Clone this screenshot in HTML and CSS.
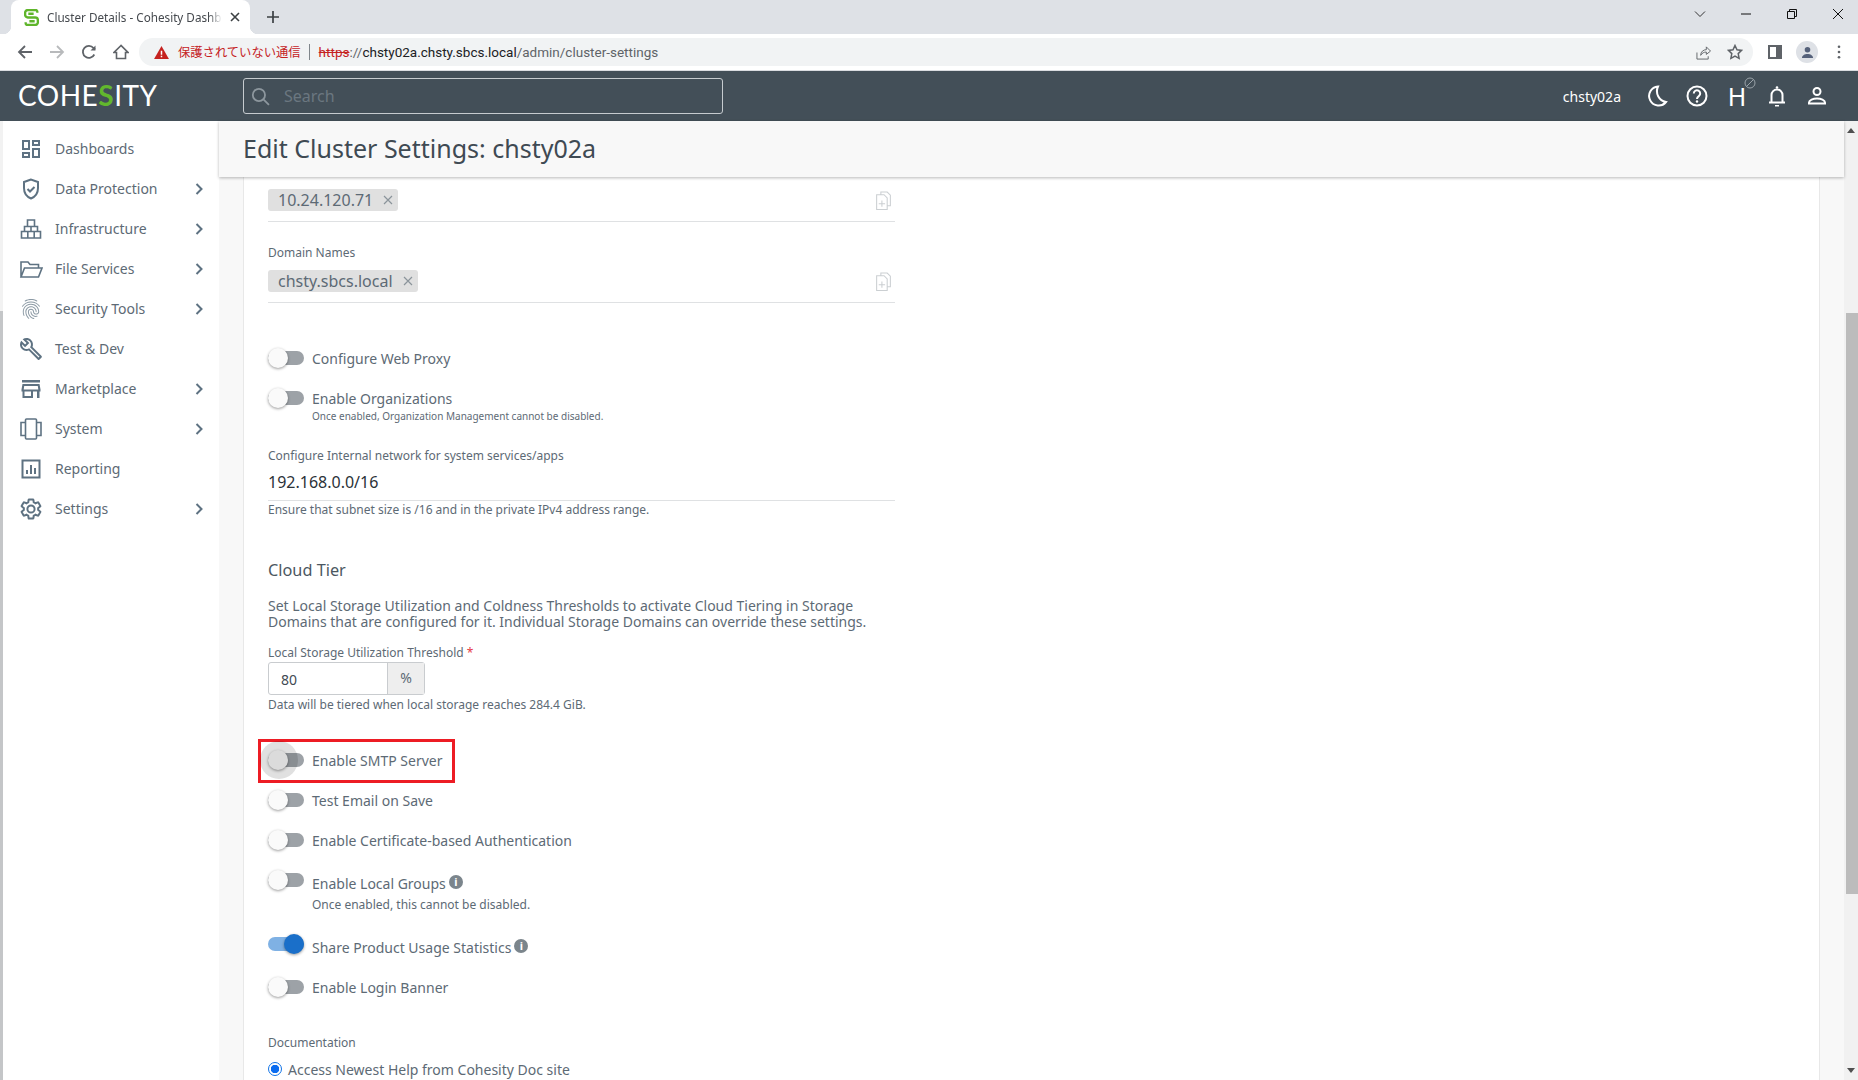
FILE: index.html
```html
<!DOCTYPE html>
<html lang="en">
<head>
<meta charset="utf-8">
<title>Cluster Details - Cohesity Dashboard</title>
<link rel="stylesheet" href="styles.css">
</head>
<body>
<div class="app">
  <div class="tabstrip">
    <div class="tab">
      <svg class="favicon" viewBox="0 0 14 16"><path d="M12.5 3.5V2.5a1.5 1.5 0 0 0-1.5-1.5H3.5A2.5 2.5 0 0 0 1 3.500V5.500A2.500 2.500 0 0 0 3.500 8H10.500A2.500 2.500 0 0 1 13 10.500V12.500A2.500 2.500 0 0 1 10.500 15H3A1.500 1.500 0 0 1 1.500 13.500V12.500M4 4.500H9M5 11.500H10" fill="none" stroke="#5fb52b" stroke-width="2.200"/></svg>
      <span class="tab-title">Cluster Details - Cohesity Dashboard</span>
      <svg class="tab-x" viewBox="0 0 10 10"><path d="M1 1l8 8M9 1l-8 8" stroke="#3c4043" stroke-width="1.600"/></svg>
    </div>
    <svg class="newtab" viewBox="0 0 12 12"><path d="M6 0v12M0 6h12" stroke="#3c4043" stroke-width="1.700"/></svg>
    <div class="winctl">
      <svg class="wbtn" viewBox="0 0 12 12"><path d="M1 3.500l5 5 5-5" fill="none" stroke="#333" stroke-width="1"/></svg>
      <svg class="wbtn" viewBox="0 0 12 12"><path d="M1 6h10" stroke="#111" stroke-width="1"/></svg>
      <svg class="wbtn" viewBox="0 0 12 12"><path d="M1.500 3.500h7v7h-7zM3.500 3.500v-2h7v7h-2" fill="none" stroke="#111" stroke-width="1"/></svg>
      <svg class="wbtn" viewBox="0 0 12 12"><path d="M1 1l10 10M11 1L1 11" stroke="#111" stroke-width="1"/></svg>
    </div>
  </div>

  <div class="toolbar">
    <svg class="navbtn" viewBox="0 0 16 16"><path d="M15 8H2M8 2L2 8l6 6" fill="none" stroke="#5f6368" stroke-width="1.800"/></svg>
    <svg class="navbtn" viewBox="0 0 16 16"><path d="M1 8h13M8 2l6 6-6 6" fill="none" stroke="#b8babc" stroke-width="1.800"/></svg>
    <svg class="navbtn" viewBox="0 0 16 16"><path d="M13.300 10.500A6 6 0 1 1 12.500 4L14 5.500" fill="none" stroke="#5f6368" stroke-width="1.800"/><path d="M14.500 1.500v5h-5z" fill="#5f6368"/></svg>
    <svg class="navbtn" viewBox="0 0 16 16"><path d="M8 1.500L1 8.500h2.500v6h9v-6H15z" fill="none" stroke="#5f6368" stroke-width="1.600"/></svg>
    <div class="omnibox">
      <svg class="warn" viewBox="0 0 16 14"><path d="M8 0L16 14H0z" fill="#c5221f"/><path d="M7.200 5h1.600v4.500H7.200zM7.200 10.500h1.600V12H7.200z" fill="#fff"/></svg>
      <span class="insecure">保護されていない通信</span>
      <span class="omni-sep"></span>
      <span class="url"><span class="scheme">https</span><span class="url-dim">://</span>chsty02a.chsty.sbcs.local<span class="url-dim">/admin/cluster-settings</span></span>
      <svg class="omni-share" viewBox="0 0 16 16"><path d="M1 8v7h12v-3M5 11c0-4 3-6 6-6V2l4.500 4.500L11 10V7.500C8.500 7.500 6.500 8.500 5 11z" fill="none" stroke="#5f6368" stroke-width="1"/></svg>
      <svg class="omni-star" viewBox="0 0 16 16"><path d="M8 1.500l2 4.300 4.600.6-3.400 3.200.9 4.700L8 12l-4.100 2.300.9-4.700L1.400 6.400 6 5.800z" fill="none" stroke="#5f6368" stroke-width="1.500"/></svg>
    </div>
    <svg class="tool-panel" viewBox="0 0 14 14"><path d="M0 0h14v14H0zM2 2v10h6V2z" fill="#5f6368" fill-rule="evenodd"/></svg>
    <div class="avatar"><svg viewBox="0 0 14 14"><circle cx="7" cy="4" r="3" fill="#55617a"/><path d="M1 13c0-3 3-4.500 6-4.500s6 1.500 6 4.500z" fill="#55617a"/></svg></div>
    <svg class="tool-menu" viewBox="0 0 4 16"><circle cx="2" cy="2" r="1.500" fill="#5f6368"/><circle cx="2" cy="8" r="1.500" fill="#5f6368"/><circle cx="2" cy="14" r="1.500" fill="#5f6368"/></svg>
  </div>

  <header class="topbar">
    <div class="logo">COHE<span class="logo-s">S</span>ITY</div>
    <div class="search">
      <svg class="search-ic" viewBox="0 0 18 18"><circle cx="7.500" cy="7.500" r="5.800" fill="none" stroke="#8d979e" stroke-width="1.700"/><path d="M12 12l5 5" stroke="#8d979e" stroke-width="1.700"/></svg>
      <span class="search-ph">Search</span>
    </div>
    <span class="cluster-name">chsty02a</span>
    <svg class="top-ic" viewBox="0 0 24 24"><path d="M13 2.500A9.500 9.500 0 1 0 21 18 11 11 0 0 1 13 2.500z" fill="none" stroke="#fff" stroke-width="2"/></svg>
    <svg class="top-ic" viewBox="0 0 24 24"><circle cx="12" cy="12" r="9.500" fill="none" stroke="#fff" stroke-width="2"/><path d="M8.800 9.500a3.200 3.200 0 1 1 5 2.600c-1.200.8-1.800 1.400-1.800 2.900" fill="none" stroke="#fff" stroke-width="2"/><circle cx="12" cy="17.500" r="1.200" fill="#fff"/></svg>
    <div class="helios"><span>H</span><svg class="helios-off" viewBox="0 0 12 12"><circle cx="6" cy="6" r="5" fill="none" stroke="#9aa3a9" stroke-width="1"/><path d="M2.500 9.500l7-7" stroke="#9aa3a9" stroke-width="1"/></svg></div>
    <svg class="top-ic" viewBox="0 0 24 24"><path d="M4 18.500h16M6.500 18.500V11a5.500 5.500 0 0 1 11 0v7.500" fill="none" stroke="#fff" stroke-width="2"/><circle cx="12" cy="3.500" r="1.300" fill="#fff"/><path d="M10 21h4v1.500h-4z" fill="#fff"/></svg>
    <svg class="top-ic" viewBox="0 0 24 24"><circle cx="12" cy="7.500" r="3.500" fill="none" stroke="#fff" stroke-width="2"/><path d="M4 19.500v-1c0-2.500 4-4 8-4s8 1.500 8 4v1z" fill="none" stroke="#fff" stroke-width="2"/></svg>
  </header>

  <div class="body">
    <nav class="sidebar">
      <a class="nav-item"><svg class="nav-ic" viewBox="0 0 24 24"><path fill-rule="evenodd" d="M19 5v2h-4V5h4M9 5v6H5V5h4m10 8v6h-4v-6h4M9 17v2H5v-2h4M21 3h-8v6h8V3zM11 3H3v10h8V3zm10 8h-8v10h8V11zm-10 4H3v6h8v-6z"/></svg><span class="nav-label">Dashboards</span></a>
      <a class="nav-item"><svg class="nav-ic line" viewBox="0 0 24 24"><path d="M12 2.500L5 5v6c0 4.800 2.900 8.800 7 10.500 4.100-1.700 7-5.700 7-10.500V5z"/><path d="M8.500 12l2.500 2.500 4.500-4.500"/></svg><span class="nav-label">Data Protection</span><svg class="chev" viewBox="0 0 8 12"><path d="M1.500 1l5 5-5 5"/></svg></a>
      <a class="nav-item"><svg class="nav-ic line thin" viewBox="0 0 24 24"><path d="M8.500 3h7v6.500h-7zM5.500 9.500h13v5h-13zM2.500 14.500h19V21h-19zM8.800 14.500V21M15.200 14.500V21M12 9.500v5"/></svg><span class="nav-label">Infrastructure</span><svg class="chev" viewBox="0 0 8 12"><path d="M1.500 1l5 5-5 5"/></svg></a>
      <a class="nav-item"><svg class="nav-ic line thin" viewBox="0 0 24 24"><path d="M2 20V5h7l2 2.500h8.500V11M2 20l3.500-9H23l-3.500 9z"/></svg><span class="nav-label">File Services</span><svg class="chev" viewBox="0 0 8 12"><path d="M1.500 1l5 5-5 5"/></svg></a>
      <a class="nav-item"><svg class="nav-ic soft" viewBox="0 0 24 24"><path d="M17.810 4.470c-.08 0-.16-.02-.23-.06C15.660 3.420 14 3 12.010 3c-1.980 0-3.860.47-5.570 1.410-.24.13-.54.04-.68-.2-.13-.24-.04-.55.2-.68C7.820 2.520 9.860 2 12.010 2c2.130 0 3.990.47 6.030 1.520.25.13.34.43.21.67-.09.18-.26.28-.44.28zM3.500 9.720c-.1 0-.2-.03-.29-.09-.23-.16-.28-.47-.12-.7.99-1.400 2.250-2.500 3.750-3.270C9.980 4.040 14 4.030 17.150 5.650c1.500.77 2.760 1.860 3.750 3.250.16.22.11.54-.12.7-.23.16-.54.11-.7-.12-.9-1.260-2.040-2.250-3.390-2.940-2.870-1.470-6.540-1.470-9.400.01-1.360.7-2.500 1.700-3.400 2.960-.08.14-.23.21-.39.21zm6.250 12.070c-.13 0-.26-.05-.35-.15-.87-.87-1.340-1.430-2.010-2.640-.69-1.230-1.050-2.730-1.050-4.340 0-2.970 2.540-5.390 5.660-5.390s5.660 2.420 5.660 5.390c0 .28-.22.5-.5.5s-.5-.22-.5-.5c0-2.420-2.090-4.390-4.660-4.390-2.570 0-4.660 1.970-4.660 4.390 0 1.440.32 2.770.93 3.850.64 1.150 1.080 1.640 1.850 2.420.19.2.19.51 0 .71-.11.1-.24.15-.37.15zm7.170-1.850c-1.190 0-2.240-.3-3.100-.89-1.490-1.010-2.380-2.650-2.380-4.390 0-.28.22-.5.5-.5s.5.22.5.5c0 1.410.72 2.740 1.940 3.560.71.48 1.540.71 2.540.71.24 0 .64-.03 1.040-.1.27-.05.53.13.58.41.05.27-.13.53-.41.58-.57.11-1.070.12-1.210.12zM14.910 22c-.04 0-.09-.01-.13-.02-1.590-.44-2.630-1.030-3.720-2.100-1.400-1.390-2.170-3.240-2.170-5.220 0-1.620 1.380-2.940 3.080-2.940 1.700 0 3.080 1.320 3.080 2.940 0 1.070.93 1.940 2.080 1.940s2.080-.87 2.080-1.940c0-3.770-3.250-6.830-7.250-6.830-2.840 0-5.440 1.580-6.610 4.030-.39.81-.59 1.760-.59 2.800 0 .78.07 2.010.67 3.610.1.26-.03.55-.29.64-.26.1-.55-.04-.64-.29-.49-1.310-.73-2.610-.73-3.960 0-1.200.23-2.290.68-3.240 1.330-2.790 4.280-4.600 7.510-4.600 4.550 0 8.250 3.510 8.250 7.830 0 1.620-1.380 2.940-3.080 2.940s-3.080-1.320-3.080-2.940c0-1.070-.93-1.940-2.080-1.940s-2.080.87-2.080 1.940c0 1.710.66 3.310 1.870 4.510.95.94 1.860 1.460 3.270 1.850.27.07.42.35.35.61-.05.23-.26.38-.47.38z"/></svg><span class="nav-label">Security Tools</span><svg class="chev" viewBox="0 0 8 12"><path d="M1.500 1l5 5-5 5"/></svg></a>
      <a class="nav-item"><svg class="nav-ic" viewBox="0 0 24 24"><path fill-rule="evenodd" d="M22.610 18.990l-9.080-9.080c.93-2.340.45-5.100-1.440-7C9.790.61 6.210.4 3.660 2.250L7.500 6.100 6.080 7.510 2.250 3.690C.4 6.230.61 9.820 2.910 12.110c1.860 1.860 4.570 2.350 6.890 1.480l9.110 9.110c.39.39 1.020.39 1.410 0l2.300-2.300c.4-.38.4-1.010-.01-1.410zm-3 1.600l-9.460-9.460c-.61.45-1.290.72-2 .82-1.360.2-2.790-.21-3.830-1.250C3.370 9.760 2.930 8.500 3 7.260l3.090 3.090 4.240-4.240-3.090-3.090c1.240-.07 2.490.37 3.440 1.310 1.080 1.080 1.490 2.570 1.240 3.960-.12.71-.42 1.370-.88 1.960l9.450 9.450-.88.880z"/></svg><span class="nav-label">Test &amp; Dev</span></a>
      <a class="nav-item"><svg class="nav-ic" viewBox="0 0 24 24"><path fill-rule="evenodd" d="M3 3h18v2.500H3zM3.500 7h17l1 5.500v2h-1V21H18v-6.500h-4V21H3.500v-6.500h-1v-2zM5.500 14.500v4.500H12v-4.500zM5.200 9l-.5 3.500h14.600L18.800 9z"/></svg><span class="nav-label">Marketplace</span><svg class="chev" viewBox="0 0 8 12"><path d="M1.500 1l5 5-5 5"/></svg></a>
      <a class="nav-item"><svg class="nav-ic line thin" viewBox="0 0 24 24"><path d="M7.500 2h9a1 1 0 0 1 1 1v18a1 1 0 0 1-1 1h-9a1 1 0 0 1-1-1V3a1 1 0 0 1 1-1zM6.500 5.500H2v13h4.500M17.500 5.500H22v13h-4.500M12 18.400v.2"/></svg><span class="nav-label">System</span><svg class="chev" viewBox="0 0 8 12"><path d="M1.500 1l5 5-5 5"/></svg></a>
      <a class="nav-item"><svg class="nav-ic line" viewBox="0 0 24 24"><path d="M3.500 3.500h17v17h-17zM8 17v-4M12 17V8M16 17v-6"/></svg><span class="nav-label">Reporting</span></a>
      <a class="nav-item"><svg class="nav-ic line" viewBox="0 0 24 24"><path d="M19.140 12.940c.04-.3.06-.61.06-.94 0-.32-.02-.64-.07-.94l2.030-1.580c.18-.14.23-.41.12-.61l-1.920-3.320c-.12-.22-.37-.29-.59-.22l-2.390.96c-.5-.38-1.030-.7-1.620-.94l-.36-2.540c-.04-.24-.24-.41-.48-.41h-3.840c-.24 0-.43.17-.47.41l-.36 2.540c-.59.24-1.130.57-1.620.94l-2.390-.96c-.22-.08-.47 0-.59.22L2.740 8.870c-.12.21-.08.47.12.61l2.030 1.580c-.05.3-.09.63-.09.94s.02.64.07.94l-2.030 1.580c-.18.14-.23.41-.12.61l1.920 3.320c.12.22.37.29.59.22l2.390-.96c.5.38 1.030.7 1.620.94l.36 2.540c.05.24.24.41.48.41h3.840c.24 0 .44-.17.47-.41l.36-2.540c.59-.24 1.130-.56 1.620-.94l2.390.96c.22.08.47 0 .59-.22l1.920-3.320c.12-.22.07-.47-.12-.61l-2.010-1.580zM12 15.600c-1.980 0-3.600-1.620-3.600-3.600s1.620-3.600 3.600-3.600 3.600 1.620 3.600 3.600-1.620 3.600-3.600 3.600z"/></svg><span class="nav-label">Settings</span><svg class="chev" viewBox="0 0 8 12"><path d="M1.500 1l5 5-5 5"/></svg></a>
    </nav>

    <main class="main">
      <div class="titlebar"><h1>Edit Cluster Settings: chsty02a</h1></div>
      <div class="scroller">
        <section class="card">
          <div class="chip-field first">
            <span class="chip">10.24.120.71<svg class="chip-x" viewBox="0 0 10 10"><path d="M1 1l8 8M9 1l-8 8"/></svg></span>
            <svg class="paste" viewBox="0 0 14 18"><path d="M4.500 3.500V1h6l3 3v10h-3M.5 3.500h7l3 3v11H.5zM5.500 9v6M2.500 12h6" /></svg>
          </div>
          <div class="field-label m-domain">Domain Names</div>
          <div class="chip-field second">
            <span class="chip">chsty.sbcs.local<svg class="chip-x" viewBox="0 0 10 10"><path d="M1 1l8 8M9 1l-8 8"/></svg></span>
            <svg class="paste" viewBox="0 0 14 18"><path d="M4.500 3.500V1h6l3 3v10h-3M.5 3.500h7l3 3v11H.5zM5.500 9v6M2.500 12h6" /></svg>
          </div>

          <div class="tgl-row m-proxy"><span class="tgl"></span><span class="tgl-label">Configure Web Proxy</span></div>
          <div class="tgl-row m-20"><span class="tgl"></span><span class="tgl-label">Enable Organizations</span></div>
          <div class="sub m-orgsub">Once enabled, Organization Management cannot be disabled.</div>

          <div class="field-label m-net">Configure Internal network for system services/apps</div>
          <div class="value-field">192.168.0.0/16</div>
          <div class="help m-1">Ensure that subnet size is /16 and in the private IPv4 address range.</div>

          <h2 class="section-title">Cloud Tier</h2>
          <p class="desc">Set Local Storage Utilization and Coldness Thresholds to activate Cloud Tiering in Storage<br>Domains that are configured for it. Individual Storage Domains can override these settings.</p>
          <div class="field-label m-thresh">Local Storage Utilization Threshold <span class="req">*</span></div>
          <div class="input-group"><span class="input-val">80</span><span class="input-unit">%</span></div>
          <div class="help m-2">Data will be tiered when local storage reaches 284.4 GiB.</div>

          <div class="tgl-row m-smtp"><span class="tgl focus"></span><span class="tgl-label">Enable SMTP Server</span><span class="highlight"></span></div>
          <div class="tgl-row m-20"><span class="tgl"></span><span class="tgl-label">Test Email on Save</span></div>
          <div class="tgl-row m-20"><span class="tgl"></span><span class="tgl-label">Enable Certificate-based Authentication</span></div>
          <div class="tgl-row m-20"><span class="tgl"></span><span class="tgl-label shift">Enable Local Groups</span><span class="info">i</span></div>
          <div class="sub m-localsub">Once enabled, this cannot be disabled.</div>
          <div class="tgl-row m-share"><span class="tgl on"></span><span class="tgl-label shift">Share Product Usage Statistics</span><span class="info">i</span></div>
          <div class="tgl-row m-login"><span class="tgl"></span><span class="tgl-label">Enable Login Banner</span></div>

          <div class="field-label m-doc">Documentation</div>
          <div class="radio-row"><span class="radio"></span><span class="tgl-label">Access Newest Help from Cohesity Doc site</span></div>
        </section>
      </div>
    </main>

    <div class="scrollbar">
      <span class="sb-up"></span>
      <span class="sb-thumb"></span>
      <span class="sb-down"></span>
    </div>
  </div>
</div>
</body>
</html>
```

FILE: styles.css
```css
* { box-sizing: border-box; }
html, body { margin: 0; padding: 0; height: 100%; overflow: hidden; background: #fff; }
body { font-family: "Noto Sans", sans-serif; color: #5d6a75; }
.app { width: 1858px; height: 1080px; display: flex; flex-direction: column; overflow: hidden; }

/* browser chrome */
.tabstrip { height: 34px; background: #dee1e6; display: flex; align-items: flex-end; flex: none; }
.tab { position: relative; width: 239px; height: 34px; margin-left: 11px; background: #fff; border-radius: 8px 8px 0 0; display: flex; align-items: center; padding: 0 7px 0 13px; }
.tab::before, .tab::after { content: ""; position: absolute; bottom: 0; width: 8px; height: 8px; }
.tab::before { left: -8px; background: radial-gradient(circle at 0 0, #dee1e6 8px, #fff 8.5px); }
.tab::after { right: -8px; background: radial-gradient(circle at 100% 0, #dee1e6 8px, #fff 8.5px); }
.favicon { width: 15px; height: 17px; flex: none; }
.tab-title { width: 175px; margin-left: 8px; font-size: 11.700px; color: #45494e; white-space: nowrap; overflow: hidden; -webkit-mask-image: linear-gradient(90deg, #000 162px, transparent 175px); mask-image: linear-gradient(90deg, #000 162px, transparent 175px); }
.tab-x { width: 10px; height: 10px; margin-left: 8px; flex: none; }
.newtab { width: 12px; height: 12px; margin: 0 0 11px 17px; flex: none; }
.winctl { margin-left: auto; display: flex; gap: 34px; padding-right: 14px; height: 28px; align-items: center; align-self: flex-start; }
.wbtn { width: 12px; height: 12px; }

.toolbar { height: 37px; background: #fff; border-bottom: 1px solid #dadce0; display: flex; align-items: center; padding: 0 0 0 17px; flex: none; }
.navbtn { width: 16px; height: 16px; margin-right: 16px; flex: none; }
.omnibox { width: 1614px; height: 28px; margin: 0 0 0 -6px; background: #f1f3f4; border-radius: 14px; display: flex; align-items: center; padding: 0 0 0 15px; flex: none; }
.warn { width: 15px; height: 13px; flex: none; }
.insecure { margin-left: 9px; font-family: "Noto Sans CJK JP", sans-serif; font-size: 12.300px; color: #c5221f; white-space: nowrap; }
.omni-sep { width: 1px; height: 16px; background: #80868b; margin: 0 9px 0 8px; }
.url { font-family: Roboto, sans-serif; font-size: 13.500px; color: #202124; white-space: nowrap; }
.scheme { color: #c5221f; text-decoration: line-through; }
.url-dim { color: #5f6368; }
.omni-share { width: 15px; height: 15px; margin-left: auto; flex: none; }
.omni-star { width: 16px; height: 16px; margin: 0 10px 0 16px; flex: none; }
.tool-panel { width: 14px; height: 14px; margin-left: 15px; flex: none; }
.avatar { width: 22px; height: 22px; margin-left: 14px; background: #dee1e6; border-radius: 50%; display: flex; align-items: center; justify-content: center; flex: none; }
.avatar svg { width: 13px; height: 13px; }
.tool-menu { width: 4px; height: 14px; margin-left: 19px; flex: none; }

/* app header */
.topbar { height: 50px; background: #434f58; display: flex; align-items: center; padding: 0 13px 0 18px; flex: none; color: #fff; }
.logo { width: 225px; margin-top: -2px; font-family: Lato, sans-serif; font-size: 28px; font-weight: 400; letter-spacing: 0.500px; color: #fff; line-height: 1; flex: none; }
.logo-s { color: #62b72d; font-weight: 700; }
.search { width: 480px; height: 36px; border: 1px solid #c6cbcf; border-radius: 3px; display: flex; align-items: center; padding-left: 7px; flex: none; }
.search-ic { width: 19px; height: 19px; flex: none; }
.search-ph { margin-left: 14px; font-size: 16px; color: #6b7780; }
.cluster-name { margin-left: auto; font-size: 14px; color: #fff; margin-right: 24px; }
.top-ic { width: 24px; height: 24px; margin-right: 16px; flex: none; }
.helios { position: relative; width: 24px; margin-right: 16px; font-size: 25px; line-height: 1; text-align: center; color: #fff; flex: none; }
.helios-off { position: absolute; left: 19px; top: -7px; width: 12px; height: 12px; }

/* layout */
.body { flex: 1; display: flex; min-height: 0; background: #f8f8f8; }
.sidebar { width: 219px; flex: none; background-color: #fff; border-left: 3px solid; border-image: linear-gradient(#f2f2f2 191px, #c4c6c8 191px) 1; padding-top: 8px; }
.nav-item { height: 40px; display: flex; align-items: center; padding-left: 16px; color: #5d6a75; }
.nav-ic { width: 24px; height: 24px; flex: none; fill: #5e7282; margin-top: -1px; }
.nav-ic.line { fill: none; stroke: #5e7282; stroke-width: 2; }
.nav-ic.thin { stroke-width: 1.600; }
.nav-ic.soft { fill: #8c9aa5; }
.nav-label { margin-left: 12px; margin-top: -1px; font-size: 14px; white-space: nowrap; }
.chev { width: 8px; height: 12px; margin-left: auto; margin-right: 16px; margin-top: -1px; fill: none; stroke: #5e7282; stroke-width: 2; flex: none; }

.main { flex: 1; min-width: 0; display: flex; flex-direction: column; }
.titlebar { height: 56px; background: #f8f8f8; padding: 0 0 2px 24px; display: flex; align-items: center; box-shadow: 0 1px 3px rgba(0,0,0,.28); position: relative; z-index: 1; flex: none; }
.titlebar h1 { margin: 0; font-size: 25px; font-weight: 400; color: #3f4a53; }
.scroller { flex: 1; min-height: 0; overflow: hidden; padding: 0 24px; }
.card { height: 100%; background: #fff; border-left: 1px solid #e8e8e8; border-right: 1px solid #e8e8e8; padding: 12px 0 0 24px; overflow: hidden; }

/* form parts */
.chip-field { width: 627px; display: flex; align-items: center; justify-content: space-between; padding: 0 4px 10px 0; border-bottom: 1px solid #dfe1e3; }
.second { margin-top: 9px; }
.chip { height: 22px; display: inline-flex; align-items: center; background: #e0e0e0; border-radius: 3px; padding: 0 5px 0 10px; font-size: 16px; color: #5d6a75; white-space: nowrap; }
.chip-x { width: 10px; height: 10px; margin-left: 10px; fill: none; stroke: #8b949b; stroke-width: 1.200; }
.paste { width: 15px; height: 19px; fill: none; stroke: #cbcfd2; stroke-width: 1; flex: none; }

.field-label { font-size: 12px; line-height: 16px; color: #5d6a75; white-space: nowrap; }
.m-domain { margin-top: 23px; }
.m-net { margin-top: 25px; }
.m-thresh { margin-top: 15px; }
.m-doc { margin-top: 38px; }
.req { color: #e53945; }

.tgl-row { position: relative; height: 20px; display: flex; align-items: center; gap: 8px; }
.m-proxy { margin-top: 45px; }
.m-20 { margin-top: 20px; }
.m-smtp { margin-top: 37px; }
.m-share { margin-top: 22px; }
.m-login { margin-top: 23px; }
.tgl { position: relative; width: 36px; height: 14px; border-radius: 7px; background: #9da2a7; flex: none; }
.tgl::after { content: ""; position: absolute; left: 0; top: -3px; width: 20px; height: 20px; border-radius: 50%; background: #fafafa; box-shadow: 0 1px 3px rgba(0,0,0,.4); }
.tgl.on { background: #7fb1e4; }
.tgl.on::after { left: 16px; background: #1a6fc9; }
.tgl.focus::before { content: ""; position: absolute; left: -8px; top: -12px; width: 38px; height: 38px; border-radius: 50%; background: rgba(0,0,0,.12); z-index: 1; }
.tgl-label { font-size: 14px; color: #5d6a75; white-space: nowrap; }
.shift { margin-top: 6px; }
.info { width: 14px; height: 14px; margin-left: -5px; margin-top: 4px; border-radius: 50%; background: #7b858c; color: #fff; font-size: 11px; font-weight: 700; line-height: 14px; text-align: center; flex: none; }
.highlight { position: absolute; left: -10px; top: -11px; width: 197px; height: 44px; border: 3px solid #ed1c24; pointer-events: none; }

.sub { margin-left: 44px; font-size: 10px; line-height: 14px; color: #5d6a75; white-space: nowrap; }
.m-orgsub { margin-top: 1px; }
.m-localsub { margin-top: 8px; font-size: 12px; }
.value-field { width: 627px; margin-top: 6px; padding-bottom: 6px; border-bottom: 1px solid #dfe1e3; font-size: 16px; line-height: 24px; color: #2b3238; }
.help { font-size: 12px; line-height: 16px; color: #5d6a75; white-space: nowrap; }
.m-1 { margin-top: 1px; }
.m-2 { margin-top: 2px; }
.section-title { margin: 40px 0 0; font-size: 16.300px; line-height: 24px; font-weight: 400; color: #4b5761; }
.desc { margin: 16px 0 0; font-size: 14px; line-height: 16px; color: #5d6a75; white-space: nowrap; }
.input-group { width: 157px; height: 33px; margin-top: 1px; display: flex; border: 1px solid #c9cccf; border-radius: 3px; }
.input-val { flex: 1; padding-left: 12px; font-size: 14px; line-height: 33px; color: #3f4a53; }
.input-unit { width: 37px; background: #eee; border-left: 1px solid #c9cccf; text-align: center; font-size: 14px; line-height: 29px; color: #5d6a75; }
.radio-row { height: 20px; margin-top: 8px; display: flex; align-items: center; gap: 6px; }
.radio { width: 14px; height: 14px; border-radius: 50%; border: 1.500px solid #1173e6; background: radial-gradient(circle, #0a6cf0 4px, #fff 4.500px); flex: none; }

/* scrollbar */
.scrollbar { position: relative; width: 14px; flex: none; background: #f1f1f1; }
.sb-up, .sb-down { position: absolute; left: 3px; width: 0; height: 0; border-left: 4px solid transparent; border-right: 4px solid transparent; }
.sb-up { top: 7px; border-bottom: 5px solid #505050; }
.sb-down { bottom: 7px; border-top: 5px solid #505050; }
.sb-thumb { position: absolute; left: 2px; right: 0; top: 192px; height: 581px; background: #bcbcbc; }
```
